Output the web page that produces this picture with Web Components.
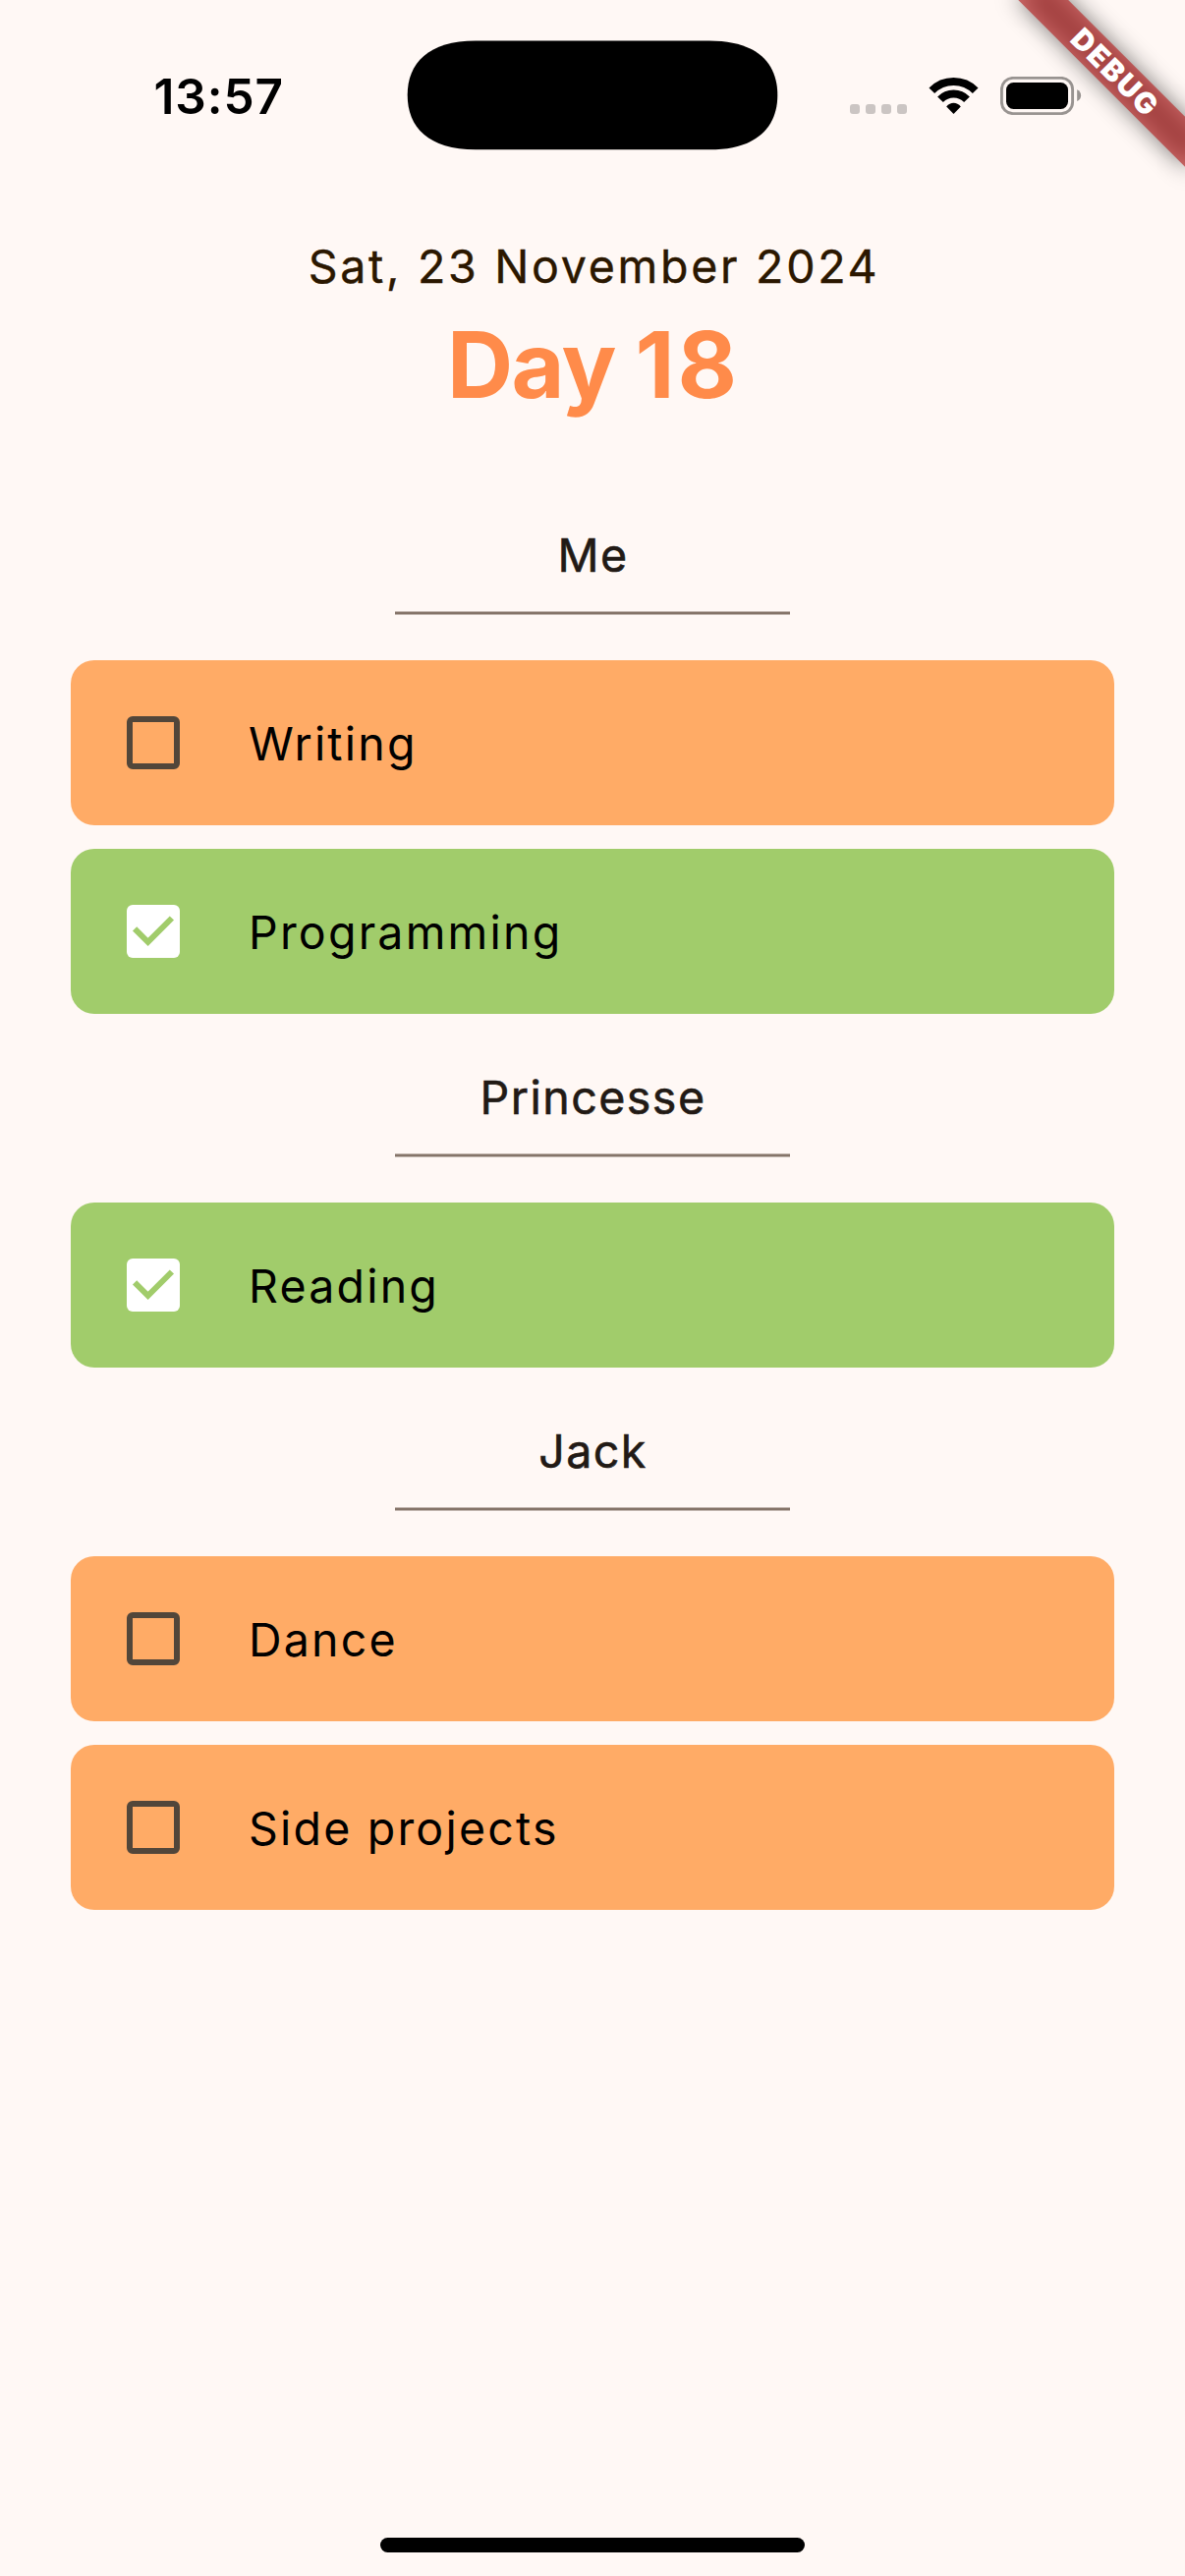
<!DOCTYPE html>
<html lang="en">
<head>
<meta charset="utf-8">
<title>Day 18</title>
<style>
html, body { margin: 0; background: #fff8f5; }
body { width: 1206px; height: 2622px; overflow: hidden; font-family: Inter, "Liberation Sans", sans-serif; }
</style>
</head>
<body>
<day-screen>
  <status-bar slot="status">13:57</status-bar>
  <day-header slot="header" date="Sat, 23 November 2024">Day <span style="letter-spacing:3px">18</span></day-header>
  <person-section name="Me">
    <task-card>Writing</task-card>
    <task-card done>Programming</task-card>
  </person-section>
  <person-section name="Princesse">
    <task-card done>Reading</task-card>
  </person-section>
  <person-section name="Jack">
    <task-card>Dance</task-card>
    <task-card>Side projects</task-card>
  </person-section>
  <corner-banner slot="banner">DEBUG</corner-banner>
</day-screen>
<script>
const define = (name, html, setup) => customElements.define(name, class extends HTMLElement {
  constructor() {
    super();
    this.attachShadow({ mode: 'open' }).innerHTML = html;
  }
  connectedCallback() { if (setup) setup(this, this.shadowRoot); }
});

define('day-screen', `
<style>
:host { display: flex; flex-direction: column; position: relative; width: 1206px; height: 2622px; overflow: hidden; background: #fff8f5; }
main { display: flex; flex-direction: column; flex: 1; padding: 0 72px; }
footer { display: flex; justify-content: center; padding-bottom: 24px; }
.home { width: 432px; height: 15px; border-radius: 7.5px; background: #000; }
</style>
<slot name="status"></slot>
<slot name="header"></slot>
<main><slot></slot></main>
<footer><div class="home"></div></footer>
<slot name="banner"></slot>`);

define('status-bar', `
<style>
:host { display: grid; grid-template-columns: 414px 378px 414px; height: 194px; align-items: center; color: #000; }
.time { padding-left: 156.5px; padding-top: 2px; font-size: 49.5px; font-weight: 600; line-height: 60px; letter-spacing: .9px; white-space: nowrap; }
.icons { display: flex; align-items: center; padding-left: 73px; padding-top: 1px; }
svg { display: block; }
.wifi { margin-left: 21px; }
.battery { margin-left: 20px; }
</style>
<div class="time"><slot></slot></div>
<svg width="378" height="112" viewBox="414 41 378 112"><path d="M484 41.4H722C770 41.4 791.3 64 791.3 96.8S770 152.3 722 152.3H484C436 152.3 414.7 129.6 414.7 96.8S436 41.4 484 41.4Z"/></svg>
<div class="icons">
  <svg width="58" height="39" viewBox="865 78 58 39" fill="#cbc5c3"><rect x="865" y="106" width="10" height="10" rx="3"/><rect x="881" y="106" width="10" height="10" rx="3"/><rect x="897" y="106" width="10" height="10" rx="3"/><rect x="913" y="106" width="10" height="10" rx="3"/></svg>
  <svg class="wifi" width="54" height="39" viewBox="944 78 54 39"><g fill="none" stroke="#000" stroke-width="8"><path d="M948.3 92.2A31.2 31.2 0 0 1 992.7 92.2"/><path d="M957 101.2A18.8 18.8 0 0 1 984 101.2"/></g><path d="M963.2 108.4C967.2 103.4 973.8 103.4 977.8 108.4L970.5 116Z"/></svg>
  <svg class="battery" width="83" height="39" viewBox="1018 78 83 39"><rect x="1019.4" y="79.4" width="72.2" height="36.2" rx="11.5" fill="none" stroke="#999491" stroke-width="2.9"/><rect x="1024" y="84" width="63" height="27" rx="7.5"/><path d="M1096.2 91.3C1101.4 93.5 1101.4 100.8 1096.2 103Z" fill="#999491"/></svg>
</div>`);

define('day-header', `
<style>
:host { display: flex; flex-direction: column; align-items: center; padding-top: 42px; height: 293px; }
p, h1 { margin: 0; white-space: nowrap; }
p { font-size: 46.5px; font-weight: 400; line-height: 70px; letter-spacing: 2.73px; color: #2b1700; padding-left: 3px; -webkit-text-stroke: .4px #2b1700; }
h1 { font-size: 93px; font-weight: 700; line-height: 130px; letter-spacing: -1.5px; color: #ff8b4a; padding-left: 2px; }
</style>
<p></p>
<h1><slot></slot></h1>`, (el, root) => { root.querySelector('p').textContent = el.getAttribute('date'); });

define('person-section', `
<style>
:host { display: flex; flex-direction: column; align-items: stretch; }
h2 { margin: 0; font-size: 46.5px; font-weight: 400; line-height: 72px; height: 93px; letter-spacing: 1.5px; color: #221a15; text-align: center; padding-left: 1px; -webkit-text-stroke: .6px #221a15; }
hr { margin: 0 auto; border: 0; width: 402px; height: 4px; background: linear-gradient(#c2b6af 1px, #857469 1px 3px, #c2b6af 3px); }
.tasks { display: flex; flex-direction: column; gap: 24px; padding: 46px 0 49px; }
</style>
<h2></h2>
<hr>
<div class="tasks"><slot></slot></div>`, (el, root) => { root.querySelector('h2').textContent = el.getAttribute('name'); });

define('task-card', `
<style>
:host { display: flex; align-items: center; gap: 70px; height: 168px; padding-left: 57px; box-sizing: border-box; border-radius: 24px; background: #ffab66; color: #000; }
:host([done]) { background: #a1cc6b; }
.box { box-sizing: border-box; width: 54px; height: 54px; border: 6px solid #52463a; border-radius: 6px; }
svg { display: none; width: 54px; height: 54px; }
:host([done]) .box { border: 0; background: #fff; }
:host([done]) svg { display: block; }
.label { padding-top: 2px; font-size: 46.5px; font-weight: 400; line-height: 60px; letter-spacing: 2.2px; white-space: nowrap; }
</style>
<div class="box"><svg viewBox="0 0 54 54"><path d="M8.1 24.3L21.6 37.8L45.9 13.5" fill="none" stroke="#a1cc6b" stroke-width="6"/></svg></div>
<div class="label"><slot></slot></div>`);

define('corner-banner', `
<style>
:host { position: absolute; left: 1206px; top: 0; width: 0; height: 0; transform: rotate(45deg); transform-origin: 0 0; }
.shade, .band { position: absolute; left: -120px; top: 84px; width: 240px; height: 36px; }
.shade { background: rgba(0,0,0,.5); filter: blur(11.9px); }
.band { display: flex; justify-content: center; align-items: center; box-sizing: border-box; padding-left: 4px; background: rgba(183,28,28,.627); color: #fff; font-size: 29.7px; font-weight: 900; line-height: 36px; letter-spacing: 1.8px; white-space: nowrap; }
</style>
<div class="shade"></div>
<div class="band"><slot></slot></div>`);
</script>
</body>
</html>
